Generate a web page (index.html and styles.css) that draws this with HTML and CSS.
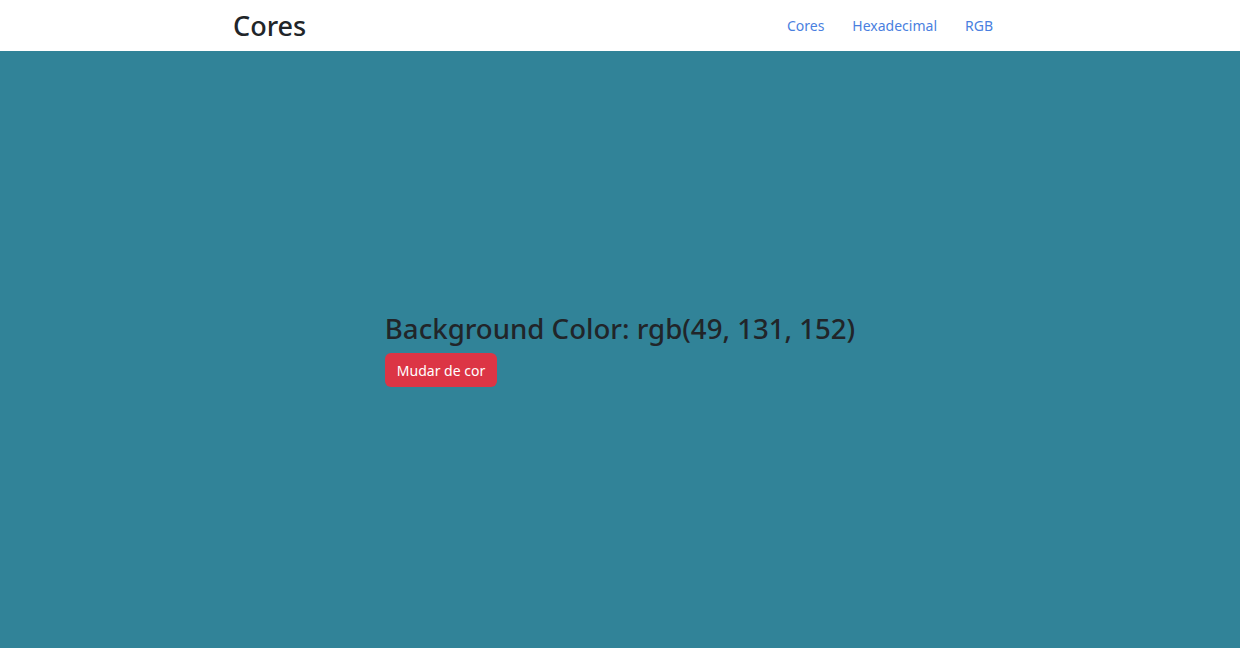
FILE: index.html
```html
<!DOCTYPE html>
<html lang="pt">
<head>
<meta charset="utf-8">
<title>Cores</title>
<link rel="stylesheet" href="styles.css">
</head>
<body>
<header class="navbar">
  <div class="nav-inner">
    <a class="brand" href="#">Cores</a>
    <nav class="nav-links">
      <a class="nav-link" href="#">Cores</a>
      <a class="nav-link" href="#">Hexadecimal</a>
      <a class="nav-link" href="#">RGB</a>
    </nav>
  </div>
</header>
<main class="stage">
  <div class="panel">
    <h2 class="title">Background Color: rgb(49, 131, 152)</h2>
    <button class="btn-danger" type="button">Mudar de cor</button>
  </div>
</main>
</body>
</html>
```
FILE: styles.css
```css
* { box-sizing: border-box; }
html, body { margin: 0; height: 100%; }
body {
  font-family: "Noto Sans", "Open Sans", sans-serif;
  color: #212529;
  display: flex;
  flex-direction: column;
  background: #318398;
}
.navbar {
  background: #fff;
  height: 51px;
  flex: none;
}
.nav-inner {
  margin: 0 auto;
  width: 784px;
  padding: 0 11px 0 5px;
  height: 100%;
  display: flex;
  align-items: center;
  justify-content: space-between;
}
.brand {
  font-size: 27px;
  font-weight: 500;
  color: #212529;
  text-decoration: none;
  line-height: 1;
}
.nav-links { display: flex; gap: 0; }
.nav-link {
  font-size: 14px;
  color: #4a7fe0;
  text-decoration: none;
  padding: 8px 14px;
}
.nav-link:last-child { padding-right: 8px; }
.stage {
  flex: 1;
  display: flex;
  align-items: center;
  justify-content: center;
}
.panel { display: flex; flex-direction: column; align-items: flex-start; }
.title {
  margin: 0 0 8px;
  font-size: 27.6px;
  font-weight: 500;
  line-height: 1.2;
}
.btn-danger {
  font-family: inherit;
  background: #dc3545;
  color: #fff;
  border: 0;
  border-radius: 6px;
  font-size: 14px;
  padding: 0 12px;
  height: 34px;
}
```
